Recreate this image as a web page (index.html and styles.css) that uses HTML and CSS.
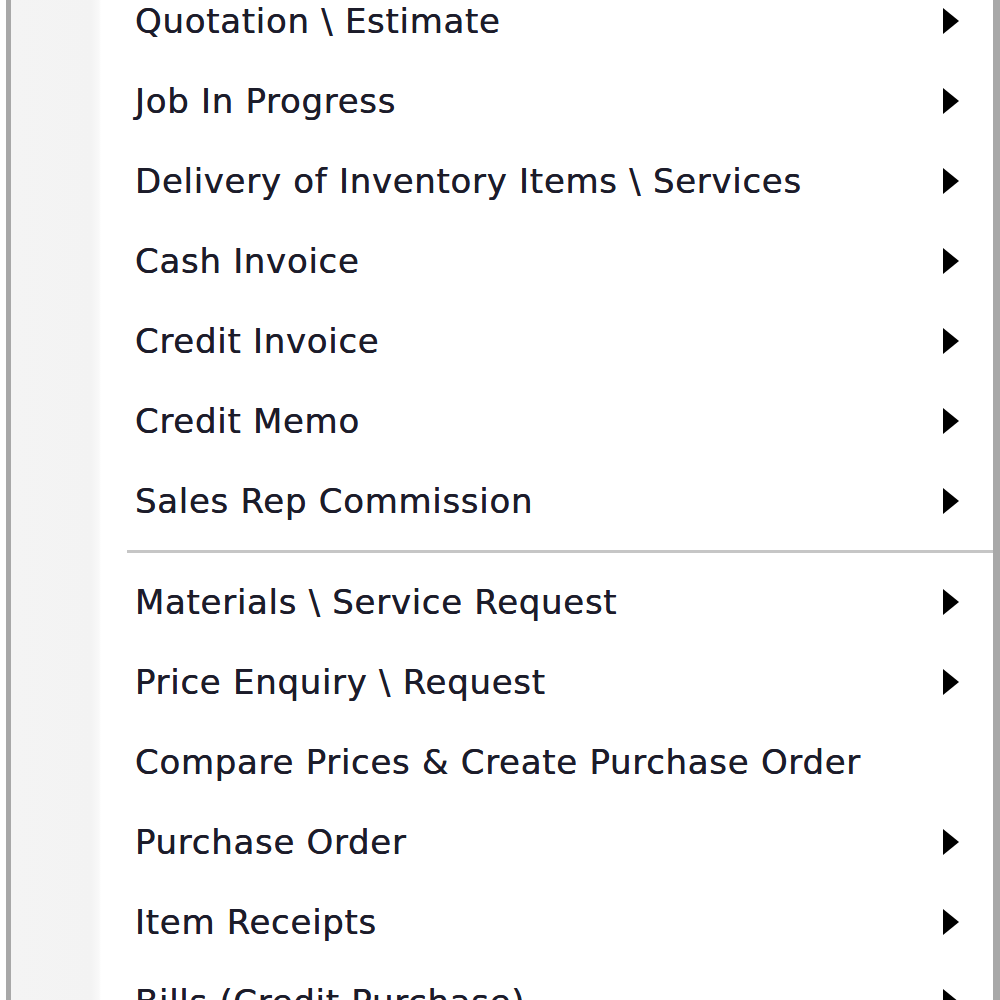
FILE: index.html
```html
<!DOCTYPE html>
<html>
<head>
<meta charset="utf-8">
<link rel="stylesheet" href="styles.css">
</head>
<body>
<div class="frame">
  <div class="menu">
    <ul class="group">
      <li class="item"><span class="label">Quotation \ Estimate</span><span class="arrow"></span></li>
      <li class="item"><span class="label">Job In Progress</span><span class="arrow"></span></li>
      <li class="item"><span class="label">Delivery of Inventory Items \ Services</span><span class="arrow"></span></li>
      <li class="item"><span class="label">Cash Invoice</span><span class="arrow"></span></li>
      <li class="item"><span class="label">Credit Invoice</span><span class="arrow"></span></li>
      <li class="item"><span class="label">Credit Memo</span><span class="arrow"></span></li>
      <li class="item"><span class="label">Sales Rep Commission</span><span class="arrow"></span></li>
    </ul>
    <div class="separator"></div>
    <ul class="group">
      <li class="item"><span class="label">Materials \ Service Request</span><span class="arrow"></span></li>
      <li class="item"><span class="label">Price Enquiry \ Request</span><span class="arrow"></span></li>
      <li class="item"><span class="label">Compare Prices &amp; Create Purchase Order</span></li>
      <li class="item"><span class="label">Purchase Order</span><span class="arrow"></span></li>
      <li class="item"><span class="label">Item Receipts</span><span class="arrow"></span></li>
      <li class="item"><span class="label">Bills (Credit Purchase)</span><span class="arrow"></span></li>
    </ul>
  </div>
</div>
</body>
</html>
```
FILE: styles.css
```css
html, body {
  margin: 0;
  padding: 0;
  background: #ffffff;
  overflow: hidden;
}
.frame {
  width: 1000px;
  height: 1000px;
  overflow: hidden;
  padding-left: 6px;
  box-sizing: border-box;
}
.menu {
  height: 1100px;
  box-sizing: border-box;
  border-left: 5px solid #a8a8a8;
  border-right: 7px solid #a8a8a8;
  background: linear-gradient(to right, #f4f4f4 0px, #f3f3f3 80px, #f9f9f9 88px, #ffffff 90px, #ffffff 100%);
  margin-top: -19px;
  font-family: "DejaVu Sans", sans-serif;
  font-size: 34px;
  letter-spacing: 0.7px;
  color: #1c1c2a;
  text-shadow: 0 0 0.6px #1c1c2a;
}
.group {
  list-style: none;
  margin: 0;
  padding: 0;
}
.item {
  height: 80px;
  display: flex;
  align-items: center;
  justify-content: space-between;
  padding-left: 124px;
  padding-right: 34px;
}
.label {
  white-space: nowrap;
}
.arrow {
  width: 0;
  height: 0;
  border-top: 13px solid transparent;
  border-bottom: 13px solid transparent;
  border-left: 16px solid #000000;
}
.separator {
  height: 21px;
  display: flex;
  align-items: center;
  padding-left: 116px;
}
.separator::before {
  content: "";
  flex: 1;
  height: 3px;
  background: #c6c6c6;
}
```
